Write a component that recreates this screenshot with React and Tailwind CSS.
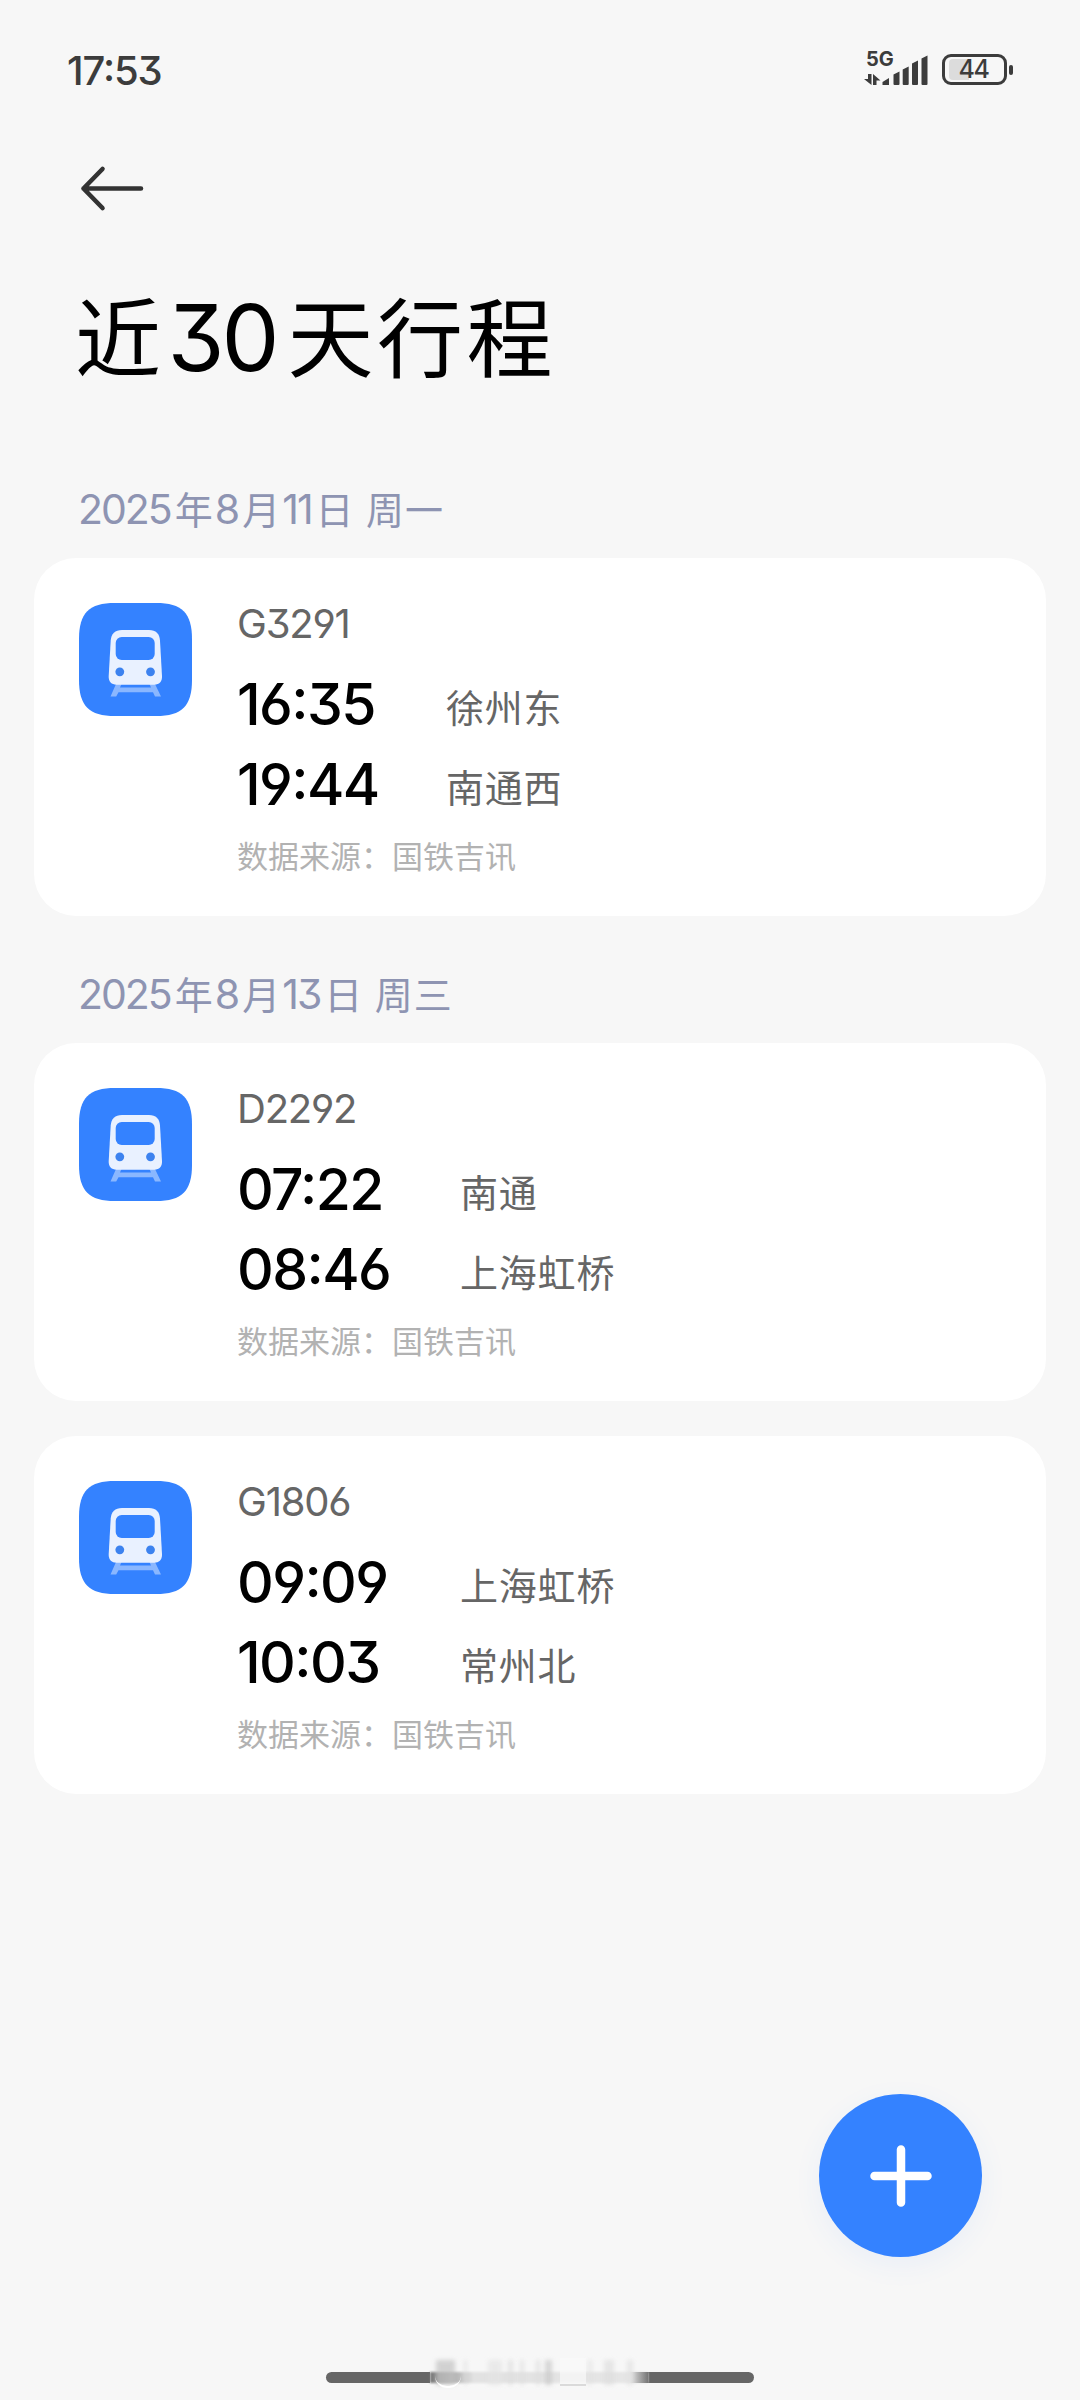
import { clsx } from "clsx";

const TRIPS = [
  {
    date: "2025年8月11日 周一",
    trains: [
      {
        no: "G3291",
        timeCol: "w-[209px]",
        stops: [
          { time: "16:35", station: "徐州东" },
          { time: "19:44", station: "南通西" },
        ],
      },
    ],
  },
  {
    date: "2025年8月13日 周三",
    trains: [
      {
        no: "D2292",
        timeCol: "w-[223px]",
        stops: [
          { time: "07:22", station: "南通" },
          { time: "08:46", station: "上海虹桥" },
        ],
      },
      {
        no: "G1806",
        timeCol: "w-[223px]",
        stops: [
          { time: "09:09", station: "上海虹桥" },
          { time: "10:03", station: "常州北" },
        ],
      },
    ],
  },
];

// open 6 / 9 and flat-topped 3
const DIGITS = "font-['Inter'] [font-feature-settings:'cv03','cv04','cv09','case']";

// Latin digits get their own font and tracking inside Chinese text
function MixedText({ text, digitClass }) {
  return text.split(/(\d+)/).filter(Boolean).map((part, i) => (
    <span key={i} className={clsx(/\d/.test(part) && [DIGITS, digitClass])}>{part}</span>
  ));
}

function StatusBar() {
  return (
    <div className="flex h-[140px] items-start justify-between pl-[67px] pr-[67px] pt-[50px] text-[#3c3c3c]">
      <span className={clsx(DIGITS, "text-[40px] leading-[41px] font-medium tracking-[-1.1px]")}>17:53</span>
      <div className="flex items-start">
        <div className="relative h-[40px] w-[64px]">
          <span className="absolute left-[2px] top-0 font-['Inter'] text-[20px] leading-[19px] font-bold">5G</span>
          <svg className="absolute left-0 top-0" width="64" height="36" viewBox="0 0 64 36" fill="currentColor">
            <path d="M4 24h3.500v11L0 29h4zM9 35V24l7.500 6.500h-4V35z" />
            <path d="M18.500 35v-3l6.500-4v7z" />
            <path d="M29.500 34V24.500l6-3V34q0 1-1 1h-4q-1 0-1-1z" />
            <path d="M38.700 34V19.500l6-3V34q0 1-1 1h-4q-1 0-1-1z" />
            <path d="M48 34V13.500l6-3V34q0 1-1 1h-4q-1 0-1-1z" />
            <path d="M57.500 34V8.500l6-3V34q0 1-1 1h-4q-1 0-1-1z" />
          </svg>
        </div>
        <div className="ml-[14px] mt-[4px] flex items-center">
          <div className="relative flex h-[31px] w-[65px] items-center justify-center rounded-[9px] border-[3px] border-current">
            <div className="absolute left-[4px] top-[2px] h-[21px] w-[20px] rounded-l-[4px] bg-[#dcdcdc]" />
            <span className="relative -left-px font-['Inter'] text-[25px] leading-[25px] font-medium tracking-[-1.5px]">44</span>
          </div>
          <div className="ml-[2px] h-[10px] w-[4px] rounded-[2px] bg-current" />
        </div>
      </div>
    </div>
  );
}

function BackArrow() {
  return (
    <svg width="66" height="48" viewBox="0 0 66 48" fill="none" stroke="#333" strokeWidth="4.600" strokeLinecap="round" strokeLinejoin="round">
      <path d="M23.500 5 4.500 24.500 23.500 44M4.500 24.500H62" />
    </svg>
  );
}

function TrainIcon() {
  return (
    <svg className="shrink-0" width="113" height="113" viewBox="0 0 113 113">
      <path fill="#3482ff" d="M36 0h41c26 0 36 10 36 36v41c0 26-10 36-36 36H36C10 113 0 103 0 77V36C0 10 10 0 36 0z" />
      <path fill="#8ab7ff" d="M37 81h5.500l-1.500 3.500h31L70.500 81H76l6 12.500h-6l-2-4.300H39.500l-2.300 4.300H31.500z" />
      <path fill="#e9f1ff" d="M43 27h27c7 0 10.500 4 11 10.500l2 35.500c.3 5.500-2.800 8.700-7.800 8.700H37.500c-5 0-8.100-3.200-7.800-8.700l2-35.500C32.200 31 36 27 43 27z" />
      <rect x="36.700" y="34" width="39" height="23" rx="6" fill="#3482ff" />
      <circle cx="40.800" cy="68.800" r="4.400" fill="#3c82ef" />
      <circle cx="71.500" cy="68.800" r="4.400" fill="#3c82ef" />
    </svg>
  );
}

function TrainCard({ train }) {
  return (
    <div className="flex h-[358px] rounded-[42px] bg-white pl-[45px] pt-[45px]">
      <TrainIcon />
      <div className="ml-[45px]">
        <p className={clsx(DIGITS, "h-[44px] text-[40px] leading-[42px] tracking-[-1.2px] text-[#666]")}>{train.no}</p>
        <div className="mt-[18px] flex">
          <div className={train.timeCol}>
            {train.stops.map(s => (
              <p key={s.time} className={clsx(DIGITS, "h-[80px] text-[57px] leading-[79px] font-medium tracking-[-1.6px] text-black")}>{s.time}</p>
            ))}
          </div>
          <div>
            {train.stops.map(s => (
              <p key={s.time} className="h-[80px] text-[38px] leading-[82px] tracking-[0.8px] text-[#666]">{s.station}</p>
            ))}
          </div>
        </div>
        <p className="mt-[10px] text-[31px] leading-[40px] text-[#b2b2b2]">数据来源：国铁吉讯</p>
      </div>
    </div>
  );
}

// soft vertical streaks left over the handle
const STREAKS = [
  { x: 6, w: 19, c: "bg-[#c2c2c2]" },
  { x: 34, w: 3, c: "bg-[#dedede]" },
  { x: 58, w: 14, c: "bg-[#e4e4e4]" },
  { x: 78, w: 5, c: "bg-[#dcdcdc]" },
  { x: 90, w: 4, c: "bg-[#dedede]" },
  { x: 106, w: 4, c: "bg-[#dcdcdc]" },
  { x: 115, w: 7, c: "bg-[#c8c8c8]" },
  { x: 158, w: 4, c: "bg-[#e2e2e2]" },
  { x: 174, w: 10, c: "bg-[#dedede]" },
  { x: 197, w: 6, c: "bg-[#e0e0e0]" },
];

function HomeIndicator() {
  return (
    <div className="absolute bottom-[17px] left-[326px] h-[11px] w-[428px] rounded-full bg-[#666]">
      <div className="absolute -top-[18px] left-[104px] h-[36px] w-[218px] bg-[#f7f7f7]">
        <div className="absolute top-[18px] h-[11px] w-full bg-linear-to-r from-[#777] via-[#e2e2e2] via-20% to-[#e6e6e6] to-90% blur-[1px]" />
        <div className="absolute top-[18px] right-0 h-[11px] w-[18px] bg-linear-to-r from-[#e6e6e6] to-[#777]" />
        {STREAKS.map(s => (
          <div key={s.x} className={clsx("absolute top-[6px] h-[25px] opacity-70 blur-[2px]", s.c)} style={{ left: s.x, width: s.w }} />
        ))}
        <div className="absolute left-[5px] top-[22px] h-[12px] w-[26px] rounded-b-full border-b-2 border-white" />
        <div className="absolute left-[130px] top-[4px] h-[28px] w-[26px] border-b-2 border-[#dadada] bg-[#fafafa]/70" />
      </div>
    </div>
  );
}

export default function App() {
  return (
    <div className="relative h-[2400px] w-[1080px] overflow-hidden bg-[#f7f7f7] font-['Noto_Sans_CJK_SC',sans-serif]">
      <StatusBar />
      <div className="pl-[79px] pt-[24px]">
        <BackArrow />
      </div>
      <h1 className="ml-[75px] mt-[62px] h-[125px] whitespace-nowrap text-[86px] leading-[120px] tracking-[3.5px] text-black">
        <MixedText text="近30天行程" digitClass="ml-[3px] mr-[11px] text-[92px] tracking-[-3px]" />
      </h1>

      <main className="px-[34px] pt-[59px]">
        {TRIPS.map((group, i) => (
          <section key={group.date} className={clsx(i > 0 && "mt-[27px]")}>
            <h2 className="h-[100px] pl-[43px] pt-[20px] text-[38px] leading-[60px] tracking-[1px] [word-spacing:2px] whitespace-nowrap text-[#8e94b2]">
              <MixedText text={group.date} digitClass="ml-px mr-[4px] text-[41px] tracking-[-2px]" />
            </h2>
            <div className="flex flex-col gap-[35px]">
              {group.trains.map(t => <TrainCard key={t.no} train={t} />)}
            </div>
          </section>
        ))}
      </main>

      <button className="absolute left-[819px] top-[2094px] flex h-[163px] w-[163px] items-center justify-center rounded-full bg-[#3482ff] shadow-[0_8px_28px_rgba(52,130,255,0.07)]">
        <svg width="62" height="62" viewBox="0 0 62 62" stroke="#fff" strokeWidth="8.500" strokeLinecap="round">
          <path d="M31 4.500v53M4.500 31h53" />
        </svg>
      </button>
      <HomeIndicator />
    </div>
  );
}
